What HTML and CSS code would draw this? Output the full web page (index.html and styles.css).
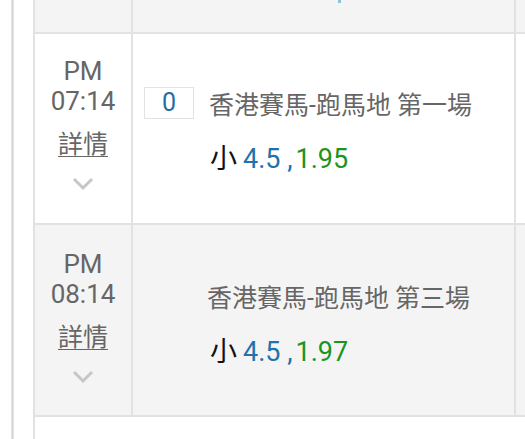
FILE: index.html
```html
<!DOCTYPE html>
<html lang="zh-Hant">

<head>
  <meta charset="UTF-8" />
  <meta name="viewport" content="width=device-width, initial-scale=1.0">
  <title>賽事列表</title>
  <link rel="stylesheet" href="styles.css">
</head>

<body>
  <div class="page">
    <div class="rail"></div>

    <div class="board">
      <div class="cell head"></div>
      <div class="cell head"><span class="cut-mark"></span></div>
      <div class="cell head"></div>

      <div class="cell time">
        <span class="time-ampm">PM</span>
        <span class="time-clock">07:14</span>
        <a class="details" href="#">詳情</a>
        <svg class="chevron" width="22" height="14" viewBox="0 0 22 14">
          <polyline points="2,2 11,11 20,2" />
        </svg>
      </div>
      <div class="cell match">
        <div class="match-title">
          <span class="rank">0</span>
          <span class="match-name">香港賽馬-跑馬地 第一場</span>
        </div>
        <div class="odds">小<span class="odds-line">4.5 ,</span><span class="odds-price">1.95</span></div>
      </div>
      <div class="cell"></div>

      <div class="cell time alt">
        <span class="time-ampm">PM</span>
        <span class="time-clock">08:14</span>
        <a class="details" href="#">詳情</a>
        <svg class="chevron" width="22" height="14" viewBox="0 0 22 14">
          <polyline points="2,2 11,11 20,2" />
        </svg>
      </div>
      <div class="cell match alt">
        <div class="match-title no-rank">
          <span class="match-name">香港賽馬-跑馬地 第三場</span>
        </div>
        <div class="odds">小<span class="odds-line">4.5 ,</span><span class="odds-price">1.97</span></div>
      </div>
      <div class="cell alt"></div>

      <div class="cell foot"></div>
    </div>
  </div>
</body>

</html>
```

FILE: styles.css
```css
* {
  box-sizing: border-box;
}

body {
  margin: 0;
  background-color: #fff;
  font-family: 'Roboto', 'Noto Sans CJK TC', sans-serif;
  overflow: hidden;
}

.page {
  display: flex;
  height: 100vh;
}

.rail {
  flex-shrink: 0;
  width: 3px;
  margin-left: 11px;
  background: linear-gradient(to right, #ececec, #d4d4d4, #ececec);
}

.board {
  flex: 1;
  margin-left: 19px;
  display: grid;
  grid-template-columns: 98px 383px 1fr;
  grid-template-rows: 34px 191px 192px 1fr;
  border-left: 2px solid #e2e2e2;
}

.cell {
  border-right: 2px solid #e2e2e2;
  border-bottom: 2px solid #e2e2e2;
}

.cell:nth-child(3n) {
  border-right: none;
}

.head,
.alt {
  background-color: #f4f4f4;
}

.foot {
  grid-column: 1 / -1;
  border: none;
}

.cut-mark {
  display: block;
  width: 3px;
  height: 3px;
  margin-left: 205px;
  background-color: #8fc3dc;
}

/* time column */
.time {
  display: flex;
  flex-direction: column;
  align-items: center;
  padding-top: 22px;
  color: #666;
  font-size: 26px;
  line-height: 30px;
}

.alt.time {
  padding-top: 24px;
}

.details {
  margin-top: 14px;
  font-size: 25px;
  color: #666;
  text-decoration: underline;
  text-underline-offset: 3px;
  text-decoration-thickness: 1px;
}

.chevron {
  margin-top: 17px;
  fill: none;
  stroke: #c6c6c6;
  stroke-width: 3;
}

/* match column */
.match {
  padding: 53px 0 0 11px;
}

.alt.match {
  padding-top: 55px;
}

.match-title {
  display: flex;
  align-items: center;
  height: 32px;
}

.match-title.no-rank {
  padding-left: 63px;
}

.rank {
  width: 50px;
  height: 32px;
  margin-right: 15px;
  border: 1px solid #e3e3e3;
  background-color: #fff;
  color: #1f6fa5;
  font-size: 25px;
  line-height: 30px;
  text-align: center;
}

.match-name {
  color: #666;
  font-size: 25px;
}

.odds {
  margin-top: 22px;
  padding-left: 66px;
  color: #111;
  font-size: 27px;
  line-height: 36px;
}

.odds-line {
  margin-left: 6px;
  color: #1f72ad;
}

.odds-price {
  margin-left: 3px;
  color: #1b951b;
}
```
